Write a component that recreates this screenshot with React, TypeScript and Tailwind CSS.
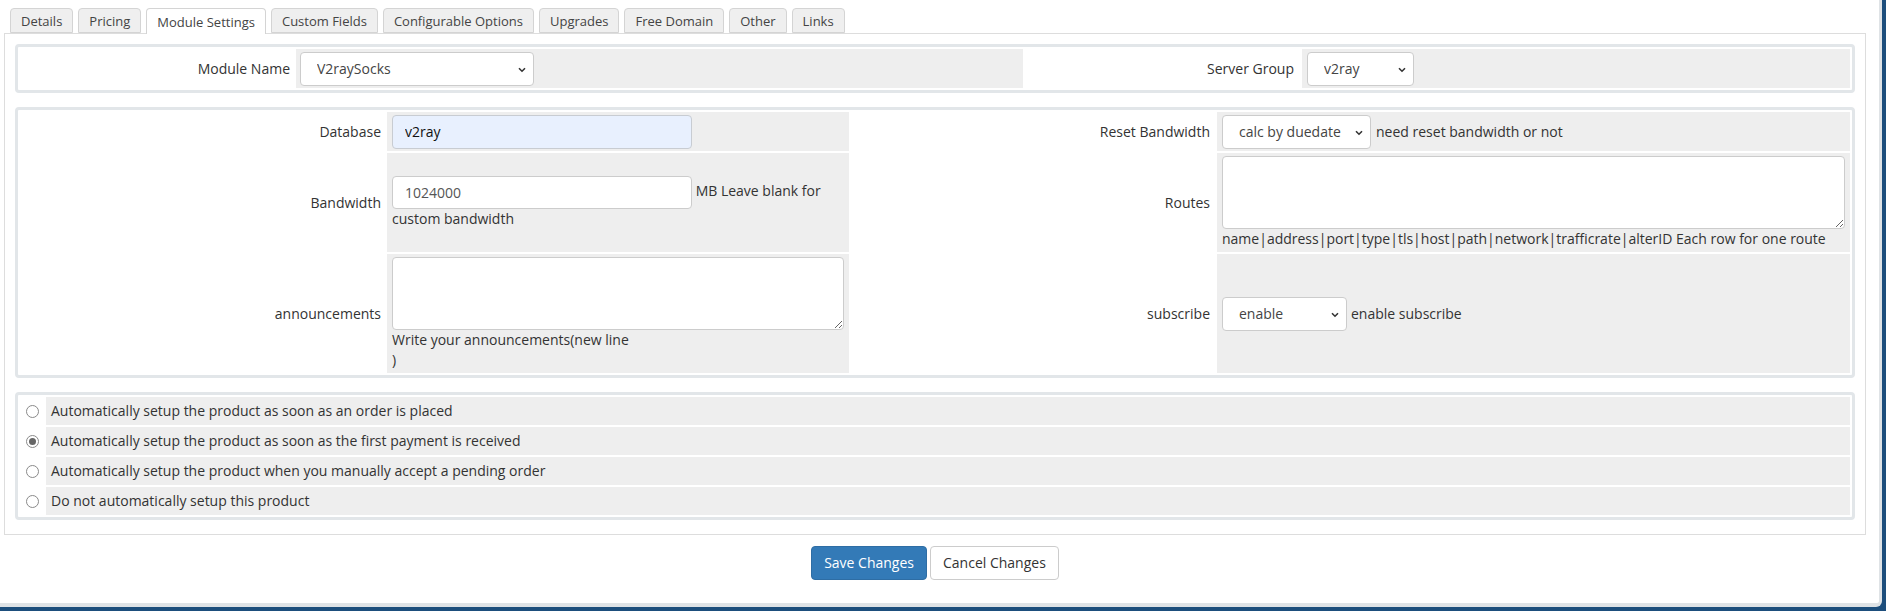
const tabs = ['Details', 'Pricing', 'Module Settings', 'Custom Fields', 'Configurable Options', 'Upgrades', 'Free Domain', 'Other', 'Links'];

const autoSetup = [
  'Automatically setup the product as soon as an order is placed',
  'Automatically setup the product as soon as the first payment is received',
  'Automatically setup the product when you manually accept a pending order',
  'Do not automatically setup this product',
];

function Select({ value, className }: { value: string; className: string }) {
  return (
    <span className={`relative inline-block align-middle ${className}`}>
      <select
        defaultValue={value}
        className="block h-[34px] w-full appearance-none rounded-[4px] border border-[#ccc] bg-white pl-[16px] pr-6 text-[14px] text-[#444] outline-none"
      >
        <option>{value}</option>
      </select>
      {/* chevron */}
      <svg className="pointer-events-none absolute right-[8px] top-[15px]" width="8" height="6" viewBox="0 0 8 6">
        <path d="M1 1.2l3 3 3-3" stroke="#333" strokeWidth="1.6" fill="none" />
      </svg>
    </span>
  );
}

function Radio({ checked }: { checked?: boolean }) {
  return (
    <span className="flex h-[13px] w-[13px] items-center justify-center rounded-full border border-[#8a8a8a] bg-white">
      {checked && <span className="h-[7px] w-[7px] rounded-full bg-[#666]" />}
    </span>
  );
}

export default function App() {
  return (
    <div className="h-[611px] w-[1886px] overflow-hidden bg-[#1d4e7c] font-['Open_Sans',sans-serif] text-[14px] leading-[20px] text-[#333]">
      <div className="h-[607px] w-[1882px] rounded-br-[6px] border-r-[3px] border-b-[4px] border-[#dfe3e6] bg-white pt-[8px] pl-[4px]">
        <div className="w-[1862px]">
          {/* Tabs */}
          <div className="relative z-10 -mb-px flex gap-[5px] pl-[6px] text-[13px]">
            {tabs.map((t) => (
              <div
                key={t}
                className={
                  t === 'Module Settings'
                    ? 'h-[26px] rounded-t-[4px] border border-b-0 border-[#d4d4d4] bg-white px-[10px] pt-[3px] text-[#444]'
                    : 'h-[25px] rounded-t-[4px] border border-[#d4d4d4] bg-[#efefef] px-[10px] pt-[2px] text-[#444]'
                }
              >
                {t}
              </div>
            ))}
          </div>

          {/* Panel */}
          <div className="border border-[#ddd] px-[10px] pt-[10px] pb-[14px]">
            {/* Module */}
            <div className="rounded-[4px] border-[3px] border-[#e2e6e9] bg-white p-[2px]">
              <div className="grid grid-cols-[274px_727px_275px_1fr] grid-rows-[39px] gap-[2px]">
                <div className="flex items-center justify-end pr-[4px]">Module Name</div>
                <div className="flex items-center bg-[#eee] px-[4px]">
                  <Select value="V2raySocks" className="w-[234px]" />
                </div>
                <div className="flex items-center justify-end pr-[6px]">Server Group</div>
                <div className="flex items-center bg-[#eee] px-[5px]">
                  <Select value="v2ray" className="w-[107px]" />
                </div>
              </div>
            </div>

            {/* Config options */}
            <div className="mt-[14px] rounded-[4px] border-[3px] border-[#e2e6e9] bg-white p-[2px]">
              <div className="grid grid-cols-[365px_462px_364px_1fr] grid-rows-[39px_99px_119px] gap-[2px]">
                <div className="flex items-center justify-end pr-[4px]">Database</div>
                <div className="flex items-center bg-[#eee] px-[5px]">
                  <input
                    defaultValue="v2ray"
                    className="h-[34px] w-[300px] rounded-[4px] border border-[#c8ccd2] bg-[#e8f0fe] px-[12px] text-[14px] text-[#111] outline-none"
                  />
                </div>
                <div className="flex items-center justify-end pr-[5px]">Reset Bandwidth</div>
                <div className="flex items-center bg-[#eee] px-[5px]">
                  <Select value="calc by duedate" className="w-[149px]" />
                  <span className="ml-[5px]">need reset bandwidth or not</span>
                </div>

                <div className="flex items-center justify-end pr-[4px]">Bandwidth</div>
                <div className="flex flex-col justify-center bg-[#eee] px-[5px]">
                  <div>
                    <input
                      defaultValue="1024000"
                      className="h-[33px] w-[300px] rounded-[4px] border border-[#ccc] bg-white px-[12px] align-middle text-[14px] text-[#555] outline-none"
                    />{' '}
                    MB Leave blank for
                    <br />
                    custom bandwidth
                  </div>
                </div>
                <div className="flex items-center justify-end pr-[5px]">Routes</div>
                <div className="flex flex-col justify-center bg-[#eee] px-[5px]">
                  <textarea className="block h-[73px] w-full rounded-[4px] border border-[#ccc] bg-white outline-none" />
                  <div>name|address|port|type|tls|host|path|network|trafficrate|alterID Each row for one route</div>
                </div>

                <div className="flex items-center justify-end pr-[4px]">announcements</div>
                <div className="flex flex-col justify-center bg-[#eee] px-[5px]">
                  <textarea className="block h-[73px] w-full rounded-[4px] border border-[#ccc] bg-white outline-none" />
                  <div>
                    Write your announcements(new line
                    <br />)
                  </div>
                </div>
                <div className="flex items-center justify-end pr-[5px]">subscribe</div>
                <div className="flex items-center bg-[#eee] px-[5px]">
                  <Select value="enable" className="w-[125px]" />
                  <span className="ml-[4px]">enable subscribe</span>
                </div>
              </div>
            </div>

            {/* Auto setup */}
            <div className="mt-[14px] rounded-[4px] border-[3px] border-[#e2e6e9] bg-white p-[2px]">
              <div className="grid grid-cols-[24px_1fr] auto-rows-[28px] gap-[2px]">
                {autoSetup.map((label, i) => (
                  <div key={label} className="contents">
                    <div className="flex items-center justify-center">
                      <Radio checked={i === 1} />
                    </div>
                    <div className="flex items-center bg-[#eee] px-[5px]">{label}</div>
                  </div>
                ))}
              </div>
            </div>
          </div>

          {/* Buttons */}
          <div className="mt-[11px] flex justify-center gap-[3px]">
            <button className="h-[34px] rounded-[4px] border border-[#2e6da4] bg-[#337ab7] px-[12px] text-[14px] text-white">
              Save Changes
            </button>
            <button className="h-[34px] rounded-[4px] border border-[#ccc] bg-white px-[12px] text-[14px] text-[#333]">
              Cancel Changes
            </button>
          </div>
        </div>
      </div>
    </div>
  );
}
